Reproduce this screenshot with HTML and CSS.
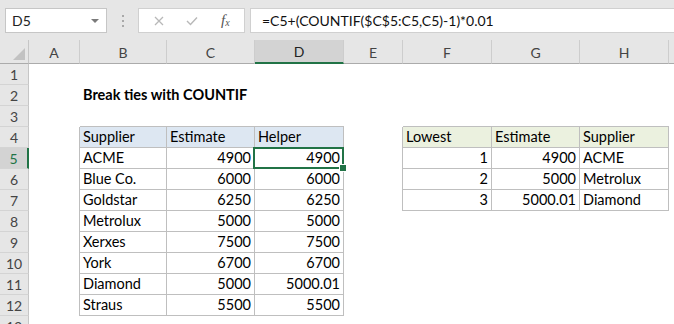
FILE: index.html
```html
<!DOCTYPE html>
<html>
<head>
<meta charset="utf-8">
<link rel="stylesheet" href="styles.css">
</head>
<body>
<div class="app">
  <div class="fbar">
    <div class="namebox"><span class="nb-text">D5</span><span class="nb-arrow"></span></div>
    <div class="grip"><i></i><i></i><i></i></div>
    <div class="btns">
      <svg class="ico-x" width="10" height="10" viewBox="0 0 10 10"><path d="M1 1L9 9M9 1L1 9" stroke="#b8b8b8" stroke-width="1.3" fill="none"/></svg>
      <svg class="ico-ok" width="12" height="10" viewBox="0 0 12 10"><path d="M1 5L4.5 8.5L11 1.5" stroke="#b8b8b8" stroke-width="1.4" fill="none"/></svg>
      <span class="fx">f<sub>x</sub></span>
    </div>
    <div class="formula">=C5+(COUNTIF($C$5:C5,C5)-1)*0.01</div>
  </div>
  <div class="sheet">
    <div class="corner"><span class="tri"></span></div>
    <div class="ch">A</div><div class="ch">B</div><div class="ch">C</div><div class="ch sel">D</div><div class="ch">E</div><div class="ch">F</div><div class="ch">G</div><div class="ch">H</div><div class="ch last"></div>

    <div class="rh">1</div><div class="c"></div><div class="c"></div><div class="c"></div><div class="c"></div><div class="c"></div><div class="c"></div><div class="c"></div><div class="c"></div><div class="c"></div>

    <div class="rh">2</div><div class="c"></div><div class="c title">Break ties with COUNTIF</div><div class="c"></div><div class="c"></div><div class="c"></div><div class="c"></div><div class="c"></div><div class="c"></div><div class="c"></div>

    <div class="rh">3</div><div class="c"></div><div class="c above"></div><div class="c above"></div><div class="c above"></div><div class="c"></div><div class="c above"></div><div class="c above"></div><div class="c above"></div><div class="c"></div>

    <div class="rh">4</div><div class="c left"></div><div class="c t hb">Supplier</div><div class="c t hb">Estimate</div><div class="c t hb">Helper</div><div class="c left"></div><div class="c t hg">Lowest</div><div class="c t hg">Estimate</div><div class="c t hg">Supplier</div><div class="c"></div>

    <div class="rh sel">5</div><div class="c left"></div><div class="c t">ACME</div><div class="c t n">4900</div><div class="c t n active">4900</div><div class="c left"></div><div class="c t n">1</div><div class="c t n">4900</div><div class="c t">ACME</div><div class="c"></div>

    <div class="rh">6</div><div class="c left"></div><div class="c t">Blue Co.</div><div class="c t n">6000</div><div class="c t n">6000</div><div class="c left"></div><div class="c t n">2</div><div class="c t n">5000</div><div class="c t">Metrolux</div><div class="c"></div>

    <div class="rh">7</div><div class="c left"></div><div class="c t">Goldstar</div><div class="c t n">6250</div><div class="c t n">6250</div><div class="c left"></div><div class="c t n">3</div><div class="c t n">5000.01</div><div class="c t">Diamond</div><div class="c"></div>

    <div class="rh">8</div><div class="c left"></div><div class="c t">Metrolux</div><div class="c t n">5000</div><div class="c t n">5000</div><div class="c"></div><div class="c"></div><div class="c"></div><div class="c"></div><div class="c"></div>

    <div class="rh">9</div><div class="c left"></div><div class="c t">Xerxes</div><div class="c t n">7500</div><div class="c t n">7500</div><div class="c"></div><div class="c"></div><div class="c"></div><div class="c"></div><div class="c"></div>

    <div class="rh">10</div><div class="c left"></div><div class="c t">York</div><div class="c t n">6700</div><div class="c t n">6700</div><div class="c"></div><div class="c"></div><div class="c"></div><div class="c"></div><div class="c"></div>

    <div class="rh">11</div><div class="c left"></div><div class="c t">Diamond</div><div class="c t n">5000</div><div class="c t n">5000.01</div><div class="c"></div><div class="c"></div><div class="c"></div><div class="c"></div><div class="c"></div>

    <div class="rh">12</div><div class="c left"></div><div class="c t">Straus</div><div class="c t n">5500</div><div class="c t n">5500</div><div class="c"></div><div class="c"></div><div class="c"></div><div class="c"></div><div class="c"></div>

    <div class="rh">13</div><div class="c"></div><div class="c"></div><div class="c"></div><div class="c"></div><div class="c"></div><div class="c"></div><div class="c"></div><div class="c"></div><div class="c"></div>
  </div>
</div>
</body>
</html>
```

FILE: styles.css
```css
* { box-sizing: border-box; }
html, body { margin: 0; padding: 0; background: #fff; overflow: hidden; }
body { width: 674px; height: 324px; font-family: Lato, "Open Sans", sans-serif; color: #000; }

.fbar {
  height: 40px;
  background: #e6e6e6;
  display: flex;
  align-items: flex-start;
  padding-top: 8px;
  padding-left: 5px;
}
.namebox {
  width: 102px; height: 25px;
  background: #fff;
  border: 1px solid #c6c6c6;
  display: flex; align-items: center; justify-content: space-between;
  padding: 0 7px 0 6px;
  font-size: 14px; color: #222;
}
.nb-arrow {
  width: 0; height: 0;
  border-left: 4px solid transparent; border-right: 4px solid transparent;
  border-top: 4px solid #7a7a7a;
}
.grip {
  width: 31px; height: 25px;
  display: flex; flex-direction: column; align-items: center; justify-content: center; gap: 3px;
}
.grip i { width: 2px; height: 2px; background: #a8a8a8; display: block; }
.btns {
  width: 107px; height: 25px; background: #fff;
  border: 1px solid #d0d0d0;
  display: flex; align-items: center;
  padding-left: 15px;
}
.ico-x { margin-right: 22px; }
.ico-ok { margin-right: 23px; }
.fx { font-family: "Liberation Serif", serif; font-style: italic; font-size: 15px; color: #555; line-height: 1; }
.fx sub { font-size: 10px; vertical-align: -1px; }
.formula {
  margin-left: 5px;
  flex: 1; height: 25px; background: #fff;
  border: 1px solid #d0d0d0; border-right: none;
  padding-left: 11px;
  display: flex; align-items: center;
  font-size: 14px; color: #111;
}

.sheet {
  display: grid;
  grid-template-columns: 29px 51px 87px 88px 89px 59px 89px 88px 89px 5px;
  grid-template-rows: 24px repeat(13, 21px);
}
.corner { background: #e6e6e6; border-right: 1px solid #c6c6c6; border-bottom: 1px solid #ababab; position: relative; }
.tri { position: absolute; right: 3px; bottom: 3px; width: 0; height: 0; border-left: 12px solid transparent; border-bottom: 12px solid #c2c2c2; }
.ch {
  background: #e6e6e6;
  border-right: 1px solid #cdcdcd;
  border-bottom: 1px solid #ababab;
  display: flex; align-items: center; justify-content: center;
  font-size: 14px; color: #444; padding-top: 1px;
}
.ch.sel { background: #d3d3d3; border-bottom: 2px solid #217346; color: #222; }
.ch.last { border-right: none; }
.rh {
  background: #e6e6e6;
  border-right: 1px solid #c6c6c6;
  border-bottom: 1px solid #d4d4d4;
  display: flex; align-items: center; justify-content: center;
  font-size: 14px; color: #444;
}
.rh.sel { background: #d3d3d3; border-right: 2px solid #217346; color: #217346; }

.c {
  font-size: 14.5px; line-height: 20px;
  padding: 0 3px; white-space: nowrap; overflow: visible;
}
.title { font-weight: bold; padding-left: 3px; }
.above { border-bottom: 1px solid #bfbfbf; }
.left { border-right: 1px solid #bfbfbf; }
.t { border-right: 1px solid #bfbfbf; border-bottom: 1px solid #bfbfbf; }
.n { text-align: right; }
.hb { background: #dde7f2; }
.hg { background: #ebf1df; }
.active { position: relative; }
.active::before {
  content: ""; position: absolute; left: -2px; top: -1px; right: -1px; bottom: -1px;
  border: 2px solid #217346;
}
.active::after {
  content: ""; position: absolute; right: -4px; bottom: -4px; width: 6px; height: 6px;
  background: #217346; border: 1px solid #fff;
}
```
